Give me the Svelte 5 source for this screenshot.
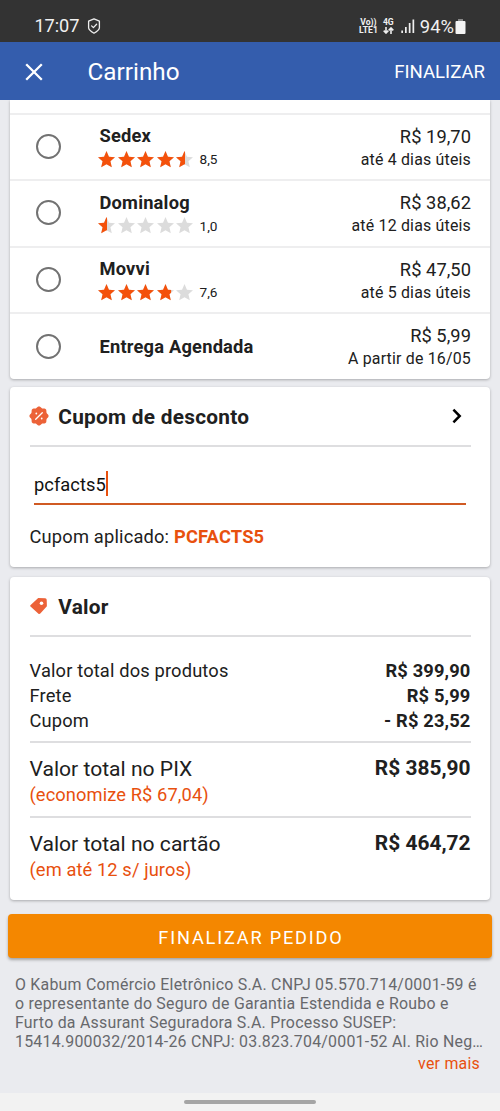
<script>
  const star = 'M8 .1 10.3 5.3 16 5.9 11.7 9.7 13 15.4 8 12.4 3 15.4 4.3 9.7 0 5.9 5.7 5.3Z';
  const options = [
    { name: 'Sedex', rating: '8,5', fills: [16, 16, 16, 16, 8.5], price: 'R$ 19,70', time: 'até 4 dias úteis' },
    { name: 'Dominalog', rating: '1,0', fills: [8.5, 0, 0, 0, 0], price: 'R$ 38,62', time: 'até 12 dias úteis' },
    { name: 'Movvi', rating: '7,6', fills: [16, 16, 16, 13.3, 0], price: 'R$ 47,50', time: 'até 5 dias úteis' },
    { name: 'Entrega Agendada', price: 'R$ 5,99', time: 'A partir de 16/05' }
  ];
  const sums = [
    ['Valor total dos produtos', 'R$ 399,90'],
    ['Frete', 'R$ 5,99'],
    ['Cupom', '- R$ 23,52']
  ];
  const totals = [
    { label: 'Valor total no PIX', note: '(economize R$ 67,04)', value: 'R$ 385,90' },
    { label: 'Valor total no cartão', note: '(em até 12 s/ juros)', value: 'R$ 464,72' }
  ];
  const legal = [
    'O Kabum Comércio Eletrônico S.A. CNPJ 05.570.714/0001-59 é',
    'o representante do Seguro de Garantia Estendida e Roubo e',
    'Furto da Assurant Seguradora S.A. Processo SUSEP:',
    '15414.900032/2014-26 CNPJ: 03.823.704/0001-52 Al. Rio Neg…'
  ];
  const seal = Array.from({ length: 80 }, (_, i) => {
    const a = (i / 80) * Math.PI * 2;
    const r = 8.9 + 0.7 * Math.cos(a * 8);
    return `${(10 + r * Math.cos(a)).toFixed(2)},${(10 + r * Math.sin(a)).toFixed(2)}`;
  }).join(' ');
</script>

<div class="screen">
  <header class="status">
    <span class="clock">17:07</span>
    <svg class="shield" width="14" height="16" viewBox="0 0 14 16" fill="none" stroke="#eee" stroke-width="1.3" stroke-linejoin="round" stroke-linecap="round">
      <path d="M7 .8 12.4 3.2V9.8C12.4 12 9.5 13.8 7 15.2 4.5 13.8 1.6 12 1.6 9.8V3.2Z" /><path d="M4.6 7.9 6.4 9.6 9.6 6.3" />
    </svg>
    <div class="indicators">
      <div class="mini volte"><span>Vo))</span><span>LTE1</span></div>
      <div class="mini net">
        <span>4G</span>
        <svg width="11" height="7" viewBox="0 0 11 7" fill="none" stroke="#eee" stroke-width="1.6"><path d="M3 0V6M.7 3.6 3 6 5.3 3.6M8 7V1M5.7 3.4 8 1 10.3 3.4" /></svg>
      </div>
      <svg class="signal" width="14" height="14" viewBox="0 0 14 14" fill="#eee"><path d="M.3 11.5h1.7V14H.3zM4 8h1.7v6H4zM7.8 4h1.7v10H7.8zM11.5.5h1.7V14h-1.7z" /></svg>
      <span class="percent">94%</span>
      <svg class="battery" width="11" height="15" viewBox="0 0 11 15"><path d="M3 0h5v2H3z" fill="#888" /><rect x=".5" y="2" width="10" height="13" rx="1" fill="#f4f4f4" /></svg>
    </div>
  </header>

  <nav class="bar">
    <svg width="18" height="18" viewBox="0 0 18 18" stroke="#fff" stroke-width="2.3" fill="none"><path d="M1.2 1.2 16.8 16.8M16.8 1.2 1.2 16.8" /></svg>
    <h1>Carrinho</h1>
    <span class="finish">FINALIZAR</span>
  </nav>

  <section class="card shipping">
    {#each options as o}
      <div class="option">
        <span class="radio"></span>
        <div class="info">
          <strong>{o.name}</strong>
          {#if o.rating}
            <div class="rating">
              {#each o.fills as w}
                <svg width="17" height="17" viewBox="0 0 16 16">
                  <path d={star} fill="#dcdcdc" />
                  <svg width={w} height="16"><path d={star} fill="#f4510b" /></svg>
                </svg>
              {/each}
              <span>{o.rating}</span>
            </div>
          {/if}
        </div>
        <div class="cost"><span class="price">{o.price}</span><span class="time">{o.time}</span></div>
      </div>
    {/each}
  </section>

  <section class="card coupon">
    <div class="heading">
      <svg width="20" height="20" viewBox="0 0 20 20"><polygon points={seal} fill="#ec6238" /><path d="M6.7 13.3 13.3 6.7" stroke="#fff" stroke-width="1.3" stroke-linecap="round" /><circle cx="7.3" cy="7.5" r=".9" fill="#fff" /><circle cx="12.7" cy="12.5" r=".9" fill="#fff" /></svg>
      <h2>Cupom de desconto</h2>
      <svg class="chevron" width="10" height="16" viewBox="0 0 10 16" fill="none" stroke="#000" stroke-width="2.5"><path d="M1.4 1.7 7.7 8 1.4 14.3" /></svg>
    </div>
    <div class="field"><span class="typed">pcfacts5</span><i></i></div>
    <p>Cupom aplicado: <b>PCFACTS5</b></p>
  </section>

  <section class="card values">
    <div class="heading">
      <svg width="20" height="20" viewBox="0 0 20 20"><path d="M1.4 9.3 9.2 2 16.2 2.2Q17.6 2.4 17.7 3.8L17.9 10.3 11.3 17.5Q10.3 18.5 9.2 17.4L1.5 10.6Q.8 9.9 1.4 9.3Z" fill="#ec6238" /><circle cx="12.5" cy="7.2" r="1.8" fill="#fff" /></svg>
      <h2>Valor</h2>
    </div>
    <div class="sums">
      {#each sums as [label, value]}
        <div class="line"><span>{label}</span><b>{value}</b></div>
      {/each}
    </div>
    {#each totals as t}
      <div class="total">
        <div class="line"><span>{t.label}</span><b>{t.value}</b></div>
        <div class="note">{t.note}</div>
      </div>
    {/each}
  </section>

  <button>FINALIZAR PEDIDO</button>

  <footer>
    {#each legal as l}<div>{l}</div>{/each}
    <span class="more">ver mais</span>
  </footer>

  <div class="gesture"><i></i></div>
</div>

<style>
  :global(body) { background: #eaebef; }
  .screen { width: 500px; height: 1111px; overflow: hidden; display: flex; flex-direction: column; background: #eaebef; font-family: Roboto, sans-serif; color: #202020; font-size: 18.3px; white-space: nowrap; }
  .screen * { box-sizing: border-box; }
  .status { height: 42px; flex: none; background: #333; color: #f0f0f0; display: flex; align-items: center; padding: 10px 33px 0 34.5px; }
  .clock { font-size: 18.2px; line-height: 32px; letter-spacing: -.1px; }
  .shield { margin-left: 7.5px; }
  .indicators { margin-left: auto; display: flex; align-items: center; }
  .mini { display: flex; flex-direction: column; align-items: center; font-size: 8.6px; line-height: 8px; font-weight: 700; }
  .net { margin-left: 5px; }
  .net svg { margin-top: 1px; }
  .signal { margin-left: 7px; }
  .percent { margin-left: 5px; font-size: 18.4px; }
  .battery { margin-left: 1px; margin-right: 1px; }
  .bar { height: 58px; flex: none; background: #345dad; color: #fff; display: flex; align-items: center; padding: 0 15px 0 25px; }
  .bar svg { margin-top: 1px; }
  h1 { font-size: 24.3px; font-weight: 400; margin: 0 0 0 44.5px; }
  .finish { margin-left: auto; font-size: 18.6px; margin-top: 2px; }
  .card { flex: none; margin: 0 10px; background: #fff; border-radius: 4px; box-shadow: 0 1px 3px rgba(0, 0, 0, .28); }
  .shipping { height: 279px; padding-top: 12.5px; border-radius: 0 0 4px 4px; clip-path: inset(0 -5px -5px -5px); }
  .option { height: 66.6px; border-top: 2px solid #eeeeef; display: flex; align-items: center; padding: 0 19px 0 26px; }
  .radio { width: 25px; height: 25px; border: 2.4px solid #727272; border-radius: 50%; margin-top: -1px; }
  .info { margin-left: 38.5px; padding-top: 1px; }
  .info strong { display: block; line-height: 24px; letter-spacing: .2px; }
  .rating { display: flex; gap: 2.5px; height: 22px; align-items: center; margin-left: -1.5px; font-size: 13.6px; }
  .rating span { margin-left: 4px; }
  .cost { margin-left: auto; text-align: right; display: flex; flex-direction: column; padding-top: 1.5px; }
  .price { line-height: 24px; letter-spacing: .05px; }
  .time { font-size: 15.9px; line-height: 22px; letter-spacing: .2px; }
  .coupon { height: 180px; margin-top: 8px; padding: 0 19.5px; }
  .heading { height: 60px; border-bottom: 2px solid #dedee0; display: flex; align-items: center; }
  .heading svg { margin: -1px 0 0 -.5px; }
  h2 { margin: 1.5px 0 0 9.3px; font-size: 20.8px; letter-spacing: .27px; }
  .heading .chevron { margin-left: auto; margin-right: 9px; }
  .field { height: 58px; margin: 0 5px 0 4.5px; border-bottom: 2.4px solid #d05a23; display: flex; align-items: flex-end; padding-bottom: 7px; color: #111; }
  .field .typed { line-height: 25px; letter-spacing: .05px; position: relative; top: 1px; }
  .field i { width: 2px; height: 25px; background: #e8500e; }
  p { margin: 20px 0 0; line-height: 24px; letter-spacing: .18px; }
  p b { color: #e8500e; }
  .values { height: 323px; margin-top: 10px; padding: 0 19.5px; }
  .sums { padding-top: 20.5px; height: 104px; letter-spacing: .15px; }
  .line { display: flex; justify-content: space-between; line-height: 25px; }
  .total { height: 75px; border-top: 2px solid #dedee0; padding-top: 11.5px; }
  .total .line { font-size: 21.1px; line-height: 27px; }
  .total .line b { font-size: 20.9px; }
  .note { color: #e8500e; line-height: 26px; letter-spacing: .1px; }
  button { flex: none; height: 44px; margin: 14px 8px 0; border: 0; border-radius: 4px; background: #f48700; color: #fff; font: 400 18.2px Roboto, sans-serif; letter-spacing: 1.8px; box-shadow: 0 2px 3px rgba(0, 0, 0, .3); padding: 3px 5px 0 7px; }
  footer { margin: 17px 20px 0 15px; font-size: 15.9px; line-height: 19px; letter-spacing: .24px; color: #67686c; display: flex; flex-direction: column; }
  .more { align-self: flex-end; color: #e8500e; margin-top: 3px; }
  .gesture { margin-top: auto; height: 18px; background: #f2f2f2; display: flex; justify-content: center; padding-top: 7px; }
  .gesture i { width: 132px; height: 4px; border-radius: 2px; background: #a5a5a5; }
</style>
